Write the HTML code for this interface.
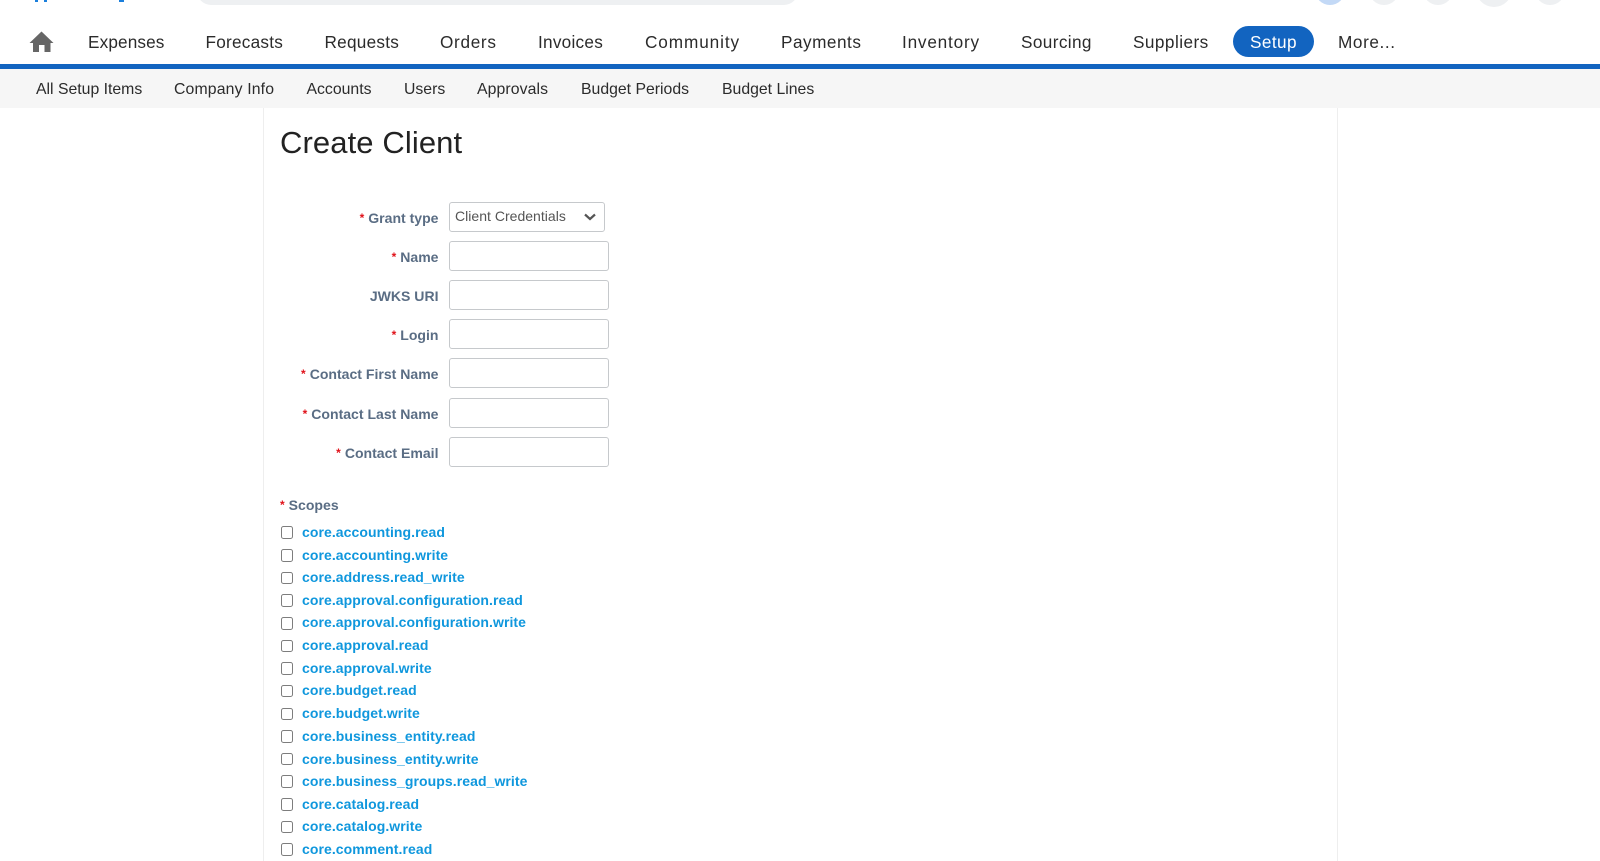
<!DOCTYPE html>
<html lang="en"><head><meta charset="utf-8"><title>Create Client</title>
<style>
*{box-sizing:border-box}
html,body{margin:0;padding:0;width:1600px;height:861px;overflow:hidden;background:#fff;font-family:"Liberation Sans",sans-serif;color:#222}
.a{position:absolute;white-space:nowrap}
.n{position:absolute;top:30px;line-height:24px;font-size:17.2px;color:#2b2b2b;white-space:nowrap}
.s{position:absolute;top:80px;line-height:20px;font-size:15.8px;color:#2b2b2b;white-space:nowrap}
.c{position:absolute;background:#eef0f2;border-radius:50%}
.l{position:absolute;right:1161.5px;font-size:14.05px;line-height:18px;font-weight:bold;color:#5a6d84;white-space:nowrap}
.l i,.sc i{font-style:normal;color:#e0121a;font-size:12px;margin-right:4px;position:relative;top:-1px}
.f{position:absolute;left:448.5px;width:160.5px;height:30px;border:1px solid #c6c9cc;border-radius:3px;background:#fff}
.k{position:absolute;left:280.6px;width:12.5px;height:12.5px;border:1.3px solid #7d7d7d;border-radius:2.5px;background:#fff}
.t{position:absolute;left:302px;font-size:14px;letter-spacing:.07px;line-height:18px;font-weight:bold;color:#0f97dd;white-space:nowrap}
</style></head><body>
<div class="a" style="left:197px;top:-30px;width:601px;height:35px;background:#eef0f2;border-radius:14px"></div>
<div class="a" style="left:35px;top:0;width:3px;height:1.5px;background:#1b7fdc"></div>
<div class="a" style="left:44px;top:0;width:3px;height:1.5px;background:#1b7fdc"></div>
<div class="a" style="left:119px;top:0;width:5px;height:1.5px;background:#1b7fdc"></div>
<div class="c" style="left:1315px;top:-25px;width:30px;height:30px;background:#c3d9f6"></div>
<div class="c" style="left:1369px;top:-25px;width:30px;height:30px"></div>
<div class="c" style="left:1423px;top:-25px;width:30px;height:30px"></div>
<div class="c" style="left:1476px;top:-29px;width:36px;height:36px"></div>
<div class="c" style="left:1535px;top:-25px;width:30px;height:30px"></div>

<svg class="a" style="left:28px;top:30px" width="28" height="23" viewBox="0 0 28 23"><path d="M13.5 1.5 L25.5 13 L22.5 13 L22.5 22 L16.5 22 L16.5 15 L11 15 L11 22 L5 22 L5 13 L1.5 13 Z" fill="#666"/></svg>
<span class="n" style="left:88px;letter-spacing:.13px">Expenses</span>
<span class="n" style="left:205.5px;letter-spacing:.23px">Forecasts</span>
<span class="n" style="left:324.5px;letter-spacing:.25px">Requests</span>
<span class="n" style="left:440px;letter-spacing:.68px">Orders</span>
<span class="n" style="left:538px;letter-spacing:.25px">Invoices</span>
<span class="n" style="left:645px;letter-spacing:.9px">Community</span>
<span class="n" style="left:781px;letter-spacing:.5px">Payments</span>
<span class="n" style="left:902px;letter-spacing:.8px">Inventory</span>
<span class="n" style="left:1021px;letter-spacing:.38px">Sourcing</span>
<span class="n" style="left:1133px;letter-spacing:.45px">Suppliers</span>
<div class="a" style="left:1233px;top:26px;width:81px;height:30.5px;background:#1264c0;border-radius:16px"></div>
<span class="n" style="left:1250px;color:#fff;letter-spacing:.4px">Setup</span>
<span class="n" style="left:1338px;top:30px;letter-spacing:.6px">More...</span>
<div class="a" style="left:0;top:64px;width:1600px;height:5px;background:#1264c0"></div>
<div class="a" style="left:0;top:69px;width:1600px;height:39px;background:#f6f6f6"></div>
<span class="s" style="left:36px">All Setup Items</span>
<span class="s" style="left:174px;letter-spacing:.15px">Company Info</span>
<span class="s" style="left:306.5px">Accounts</span>
<span class="s" style="left:404px">Users</span>
<span class="s" style="left:477px;letter-spacing:.1px">Approvals</span>
<span class="s" style="left:581px">Budget Periods</span>
<span class="s" style="left:722px">Budget Lines</span>

<div class="a" style="left:262.5px;top:108px;width:1px;height:753px;background:#eeeeee"></div>
<div class="a" style="left:1336.5px;top:108px;width:1px;height:753px;background:#eeeeee"></div>

<div class="a" style="left:280px;top:124px;font-size:31px;letter-spacing:.1px;line-height:38px;color:#222">Create Client</div>

<span class="l" style="top:209px"><i>*</i>Grant type</span>
<span class="l" style="top:248px"><i>*</i>Name</span>
<span class="l" style="top:287px">JWKS URI</span>
<span class="l" style="top:326px"><i>*</i>Login</span>
<span class="l" style="top:365px"><i>*</i>Contact First Name</span>
<span class="l" style="top:405px"><i>*</i>Contact Last Name</span>
<span class="l" style="top:444px"><i>*</i>Contact Email</span>

<div class="f" style="top:202px;width:156px"></div>
<span class="a" style="left:455px;top:208px;font-size:14px;letter-spacing:.02px;line-height:17px;color:#555">Client Credentials</span>
<svg class="a" style="left:583px;top:212px" width="14" height="10" viewBox="0 0 14 10"><path d="M2 2.5 L7 7 L12 2.5" fill="none" stroke="#555" stroke-width="2.2"/></svg>
<div class="f" style="top:241px"></div>
<div class="f" style="top:280px"></div>
<div class="f" style="top:319px"></div>
<div class="f" style="top:358px"></div>
<div class="f" style="top:397.5px"></div>
<div class="f" style="top:436.5px"></div>

<span class="a sc" style="left:280px;top:496px;font-size:14.05px;line-height:18px;font-weight:bold;color:#5a6d84"><i>*</i>Scopes</span>

<div class="k" style="top:526.4px"></div><span class="t" style="top:523px">core.accounting.read</span>
<div class="k" style="top:549px"></div><span class="t" style="top:546px">core.accounting.write</span>
<div class="k" style="top:571.7px"></div><span class="t" style="top:568px">core.address.read_write</span>
<div class="k" style="top:594.4px"></div><span class="t" style="top:591px">core.approval.configuration.read</span>
<div class="k" style="top:617px"></div><span class="t" style="top:613px">core.approval.configuration.write</span>
<div class="k" style="top:639.6px"></div><span class="t" style="top:636px">core.approval.read</span>
<div class="k" style="top:662.3px"></div><span class="t" style="top:659px">core.approval.write</span>
<div class="k" style="top:684.9px"></div><span class="t" style="top:681px">core.budget.read</span>
<div class="k" style="top:707.6px"></div><span class="t" style="top:704px">core.budget.write</span>
<div class="k" style="top:730.2px"></div><span class="t" style="top:727px">core.business_entity.read</span>
<div class="k" style="top:752.9px"></div><span class="t" style="top:750px">core.business_entity.write</span>
<div class="k" style="top:775.4px"></div><span class="t" style="top:772px">core.business_groups.read_write</span>
<div class="k" style="top:798.1px"></div><span class="t" style="top:795px">core.catalog.read</span>
<div class="k" style="top:820.7px"></div><span class="t" style="top:817px">core.catalog.write</span>
<div class="k" style="top:843.4px"></div><span class="t" style="top:840px">core.comment.read</span>
</body></html>
